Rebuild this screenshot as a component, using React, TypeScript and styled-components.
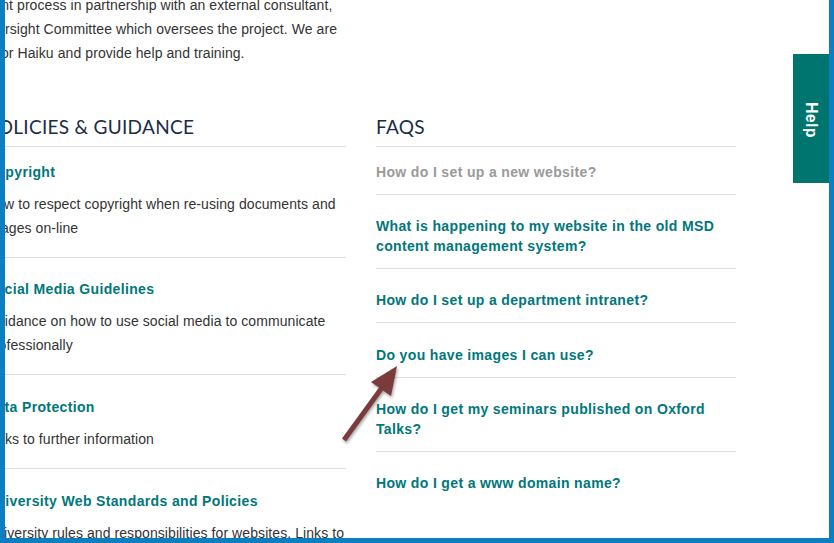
import React from "react";
import styled, { createGlobalStyle } from "styled-components";

const Global = createGlobalStyle`
  html, body { margin: 0; padding: 0; background: #fff; }
  body { font-family: "Liberation Sans", Arial, sans-serif; }
`;

const Frame = styled.div`
  position: relative;
  width: 834px;
  height: 543px;
  box-sizing: border-box;
  border: 5px solid #0a7fc2;
  border-top: 0;
  overflow: hidden;
  background: #fff;
`;

const Page = styled.div`
  margin: -7px 0 0 -19px;
  width: 750px;
`;

const Intro = styled.div`
  width: 360px;
`;

const IntroLine = styled.span<{ $shift: number }>`
  display: block;
  white-space: nowrap;
  margin-left: ${(p) => p.$shift}px;
  font-size: 14px;
  line-height: 24px;
  letter-spacing: 0.08px;
  color: #333;
`;

const Columns = styled.div`
  display: grid;
  grid-template-columns: 360px 360px;
  column-gap: 30px;
  margin-top: 50px;
`;

const Section = styled.section`
  min-width: 0;
`;

const Heading = styled.h2`
  margin: 0;
  font-family: Lato, "Noto Sans", sans-serif;
  font-weight: 400;
  font-size: 19px;
  line-height: 24px;
  letter-spacing: 0.3px;
  color: #1c2c46;
  padding-bottom: 7px;
  border-bottom: 1px solid #dedede;
`;

const List = styled.ul`
  list-style: none;
  margin: 0;
  padding: 0;
`;

const PolicyItem = styled.li`
  padding: 22px 0 17px;
  border-bottom: 1px solid #dedede;
  &:first-child {
    padding-top: 15px;
  }
  &:nth-child(2) {
    padding-top: 21px;
  }
`;

const FaqItem = styled.li`
  padding: 21px 0 12px;
  border-bottom: 1px solid #dedede;
  &:first-child {
    padding-top: 15px;
  }
  &:nth-child(4) {
    padding-top: 22px;
  }
  &:last-child {
    border-bottom: 0;
  }
`;

const ItemLink = styled.a<{ $visited?: boolean }>`
  display: block;
  font-weight: 700;
  font-size: 14px;
  line-height: 20px;
  letter-spacing: 0.35px;
  color: ${(p) => (p.$visited ? "#9a9a9a" : "#00777a")};
  text-decoration: none;
`;

const Desc = styled.p`
  margin: 10px 0 0;
  font-size: 14px;
  line-height: 24px;
  letter-spacing: 0.08px;
  color: #333;
`;

const HelpTab = styled.a`
  position: absolute;
  right: 0;
  top: 54px;
  width: 36px;
  height: 129px;
  background: #00746f;
  display: flex;
  align-items: center;
  justify-content: center;
  text-decoration: none;
`;

const HelpLabel = styled.span`
  writing-mode: vertical-rl;
  color: #fff;
  font-weight: 700;
  font-size: 16px;
  line-height: 16px;
  letter-spacing: 0.3px;
  margin-top: 2px;
`;

const ArrowSvg = styled.svg`
  position: absolute;
  left: 325px;
  top: 355px;
  overflow: visible;
  filter: drop-shadow(1px 2px 1.5px rgba(0, 0, 0, 0.35));
`;

const policies = [
  {
    title: "Copyright",
    desc: "How to respect copyright when re-using documents and images on-line",
  },
  {
    title: "Social Media Guidelines",
    desc: "Guidance on how to use social media to communicate professionally",
  },
  { title: "Data Protection", desc: "Links to further information" },
  {
    title: "University Web Standards and Policies",
    desc: "University rules and responsibilities for websites. Links to further information",
  },
];

const faqs = [
  { q: "How do I set up a new website?", visited: true },
  { q: "What is happening to my website in the old MSD content management system?" },
  { q: "How do I set up a department intranet?" },
  { q: "Do you have images I can use?" },
  { q: "How do I get my seminars published on Oxford Talks?" },
  { q: "How do I get a www domain name?" },
];

export default function App() {
  return (
    <>
      <Global />
      <Frame>
        <Page>
          <Intro>
            <IntroLine $shift={-54}>
              development process in partnership with an external consultant,
            </IntroLine>
            <IntroLine $shift={-7}>
              Oversight Committee which oversees the project. We are
            </IntroLine>
            <IntroLine $shift={11}>for Haiku and provide help and training.</IntroLine>
          </Intro>
          <Columns>
            <Section>
              <Heading>POLICIES &amp; GUIDANCE</Heading>
              <List>
                {policies.map((p) => (
                  <PolicyItem key={p.title}>
                    <ItemLink href="#">{p.title}</ItemLink>
                    <Desc>{p.desc}</Desc>
                  </PolicyItem>
                ))}
              </List>
            </Section>
            <Section>
              <Heading>FAQS</Heading>
              <List>
                {faqs.map((f) => (
                  <FaqItem key={f.q}>
                    <ItemLink href="#" $visited={f.visited}>
                      {f.q}
                    </ItemLink>
                  </FaqItem>
                ))}
              </List>
            </Section>
          </Columns>
        </Page>
        <HelpTab href="#">
          <HelpLabel>Help</HelpLabel>
        </HelpTab>
        <ArrowSvg width="80" height="95" viewBox="0 0 80 95">
          <polygon
            points="12,83.5 49,32.5 41,27 67,11 61,41 53,35.5 16,86.5"
            fill="#7b3b3c"
          />
        </ArrowSvg>
      </Frame>
    </>
  );
}
